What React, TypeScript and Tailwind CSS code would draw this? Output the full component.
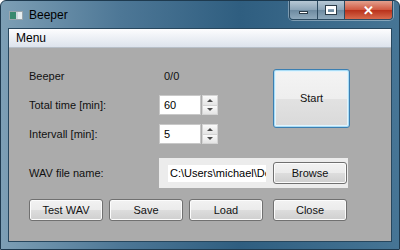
import React from "react";

const font = { fontFamily: '"Liberation Sans", Arial, sans-serif' };

const Btn = ({ label, className = "" }: { label: string; className?: string }) => (
  <button
    className={`flex h-[22px] w-[74px] items-center justify-center rounded-[3px] border border-[#707070] bg-[linear-gradient(#f2f2f2_0%,#ebebeb_50%,#dddddd_51%,#cfcfcf_100%)] text-[11px] text-[#111] shadow-[inset_0_0_0_1px_#fcfcfc] ${className}`}
  >
    {label}
  </button>
);

const SpinBox = ({ value }: { value: string }) => (
  <div className="flex h-[20px] items-stretch">
    <div className="flex w-[42px] items-center border border-[#c8c8c8] bg-white pl-[4px] text-[11px] text-black">
      {value}
    </div>
    <div className="ml-[1px] flex w-[16px] flex-col border border-[#d4d4d4] bg-[#f4f4f4]">
      <div className="flex flex-1 items-center justify-center border-b border-[#d4d4d4] bg-[linear-gradient(#fafafa,#e4e4e4)]">
        <div className="h-0 w-0 border-x-[3px] border-b-[3px] border-x-transparent border-b-[#4a4a4a]" />
      </div>
      <div className="flex flex-1 items-center justify-center bg-[linear-gradient(#fafafa,#e4e4e4)]">
        <div className="h-0 w-0 border-x-[3px] border-t-[3px] border-x-transparent border-t-[#4a4a4a]" />
      </div>
    </div>
  </div>
);

const App = () => {
  return (
    <div
      className="flex h-[250px] w-[400px] flex-col overflow-hidden rounded-t-[6px] border border-[#1e3a4f] bg-[linear-gradient(90deg,#7d9fb5_0%,#4d7796_30%,#2f5e80_60%,#467595_100%)]"
      style={font}
    >
      {/* title bar */}
      <div className="flex h-[27px] shrink-0 items-start justify-between">
        <div className="flex h-[20px] items-center pl-[8px] pt-[8px]">
          <div className="flex h-[9px] w-[14px] overflow-hidden border border-[#9aa6ad] bg-[#e8eef0]">
            <div className="w-[6px] bg-[#3a8a6e]" />
            <div className="w-[2px] bg-[#cfd8dc]" />
          </div>
          <span className="ml-[6px] text-[12px] text-black">Beeper</span>
        </div>
        <div className="mr-[6px] flex h-[19px] overflow-hidden rounded-b-[4px] border border-t-0 border-[#2c4a60] shadow-[0_0_0_1px_rgba(255,255,255,0.35)]">
          <div className="flex w-[28px] items-center justify-center border-r border-[#2c4a60] bg-[linear-gradient(#b7c8d5,#8aa3b6_50%,#6d8aa0_51%,#8fa9bc)]">
            <div className="mt-[4px] h-[3px] w-[9px] border border-[#2c3c48] bg-white" />
          </div>
          <div className="flex w-[27px] items-center justify-center border-r border-[#2c4a60] bg-[linear-gradient(#b7c8d5,#8aa3b6_50%,#6d8aa0_51%,#8fa9bc)]">
            <div className="h-[8px] w-[10px] border-[2px] border-t-[3px] border-white outline outline-1 outline-[#2c3c48]" />
          </div>
          <div className="flex w-[47px] items-center justify-center bg-[linear-gradient(#e3a08e,#d0573f_50%,#b8311b_51%,#d86a4c)] text-[13px] font-bold leading-none text-white">
            ✕
          </div>
        </div>
      </div>

      {/* client area */}
      <div className="mx-[7px] flex flex-1 flex-col border border-[#27475e] bg-[#ababab]">
        <div className="flex h-[19px] shrink-0 items-center border-b border-[#b7bfc8] bg-[linear-gradient(#fdfdfe,#eef1f6_45%,#dde3ec)] pl-[7px] text-[12px] text-black">
          Menu
        </div>
        <div className="flex flex-1 flex-col pl-[20px] pt-[18px] text-[11px] text-[#111]">
          <div className="flex">
            <div className="flex w-[244px] flex-col gap-[9px]">
              <div className="flex h-[20px] items-center">
                <span className="w-[130px]">Beeper</span>
                <span className="pl-[5px]">0/0</span>
              </div>
              <div className="flex h-[20px] items-center">
                <span className="w-[130px]">Total time [min]:</span>
                <SpinBox value="60" />
              </div>
              <div className="flex h-[20px] items-center">
                <span className="w-[130px]">Intervall [min]:</span>
                <SpinBox value="5" />
              </div>
            </div>
            <button className="mt-[3px] flex h-[59px] w-[77px] items-center justify-center rounded-[3px] border border-[#3c7fb1] bg-[linear-gradient(#f4f4f4_0%,#eeeeee_50%,#e2e2e2_51%,#d9d9d9_100%)] text-[11px] text-[#111] shadow-[inset_0_0_0_1px_#a8dcf6,inset_0_0_0_2px_#e4f4fc]">
              Start
            </button>
          </div>

          <div className="mt-[14px] flex h-[30px] items-center">
            <span className="w-[130px]">WAV file name:</span>
            <div className="flex h-[30px] w-[189px] items-center bg-[#ececec] pl-[9px]">
              <div className="flex h-[17px] w-[98px] items-center overflow-hidden whitespace-nowrap bg-white pl-[2px] text-[11px] text-black">
                C:\Users\michael\De
              </div>
              <Btn label="Browse" className="ml-[7px] h-[21px] w-[72px]" />
            </div>
          </div>

          <div className="mt-[11px] flex">
            <Btn label="Test WAV" />
            <Btn label="Save" className="ml-[6px]" />
            <Btn label="Load" className="ml-[6px]" />
            <Btn label="Close" className="ml-[10px]" />
          </div>
        </div>
      </div>
      <div className="h-[7px] shrink-0" />
    </div>
  );
};

export default App;
